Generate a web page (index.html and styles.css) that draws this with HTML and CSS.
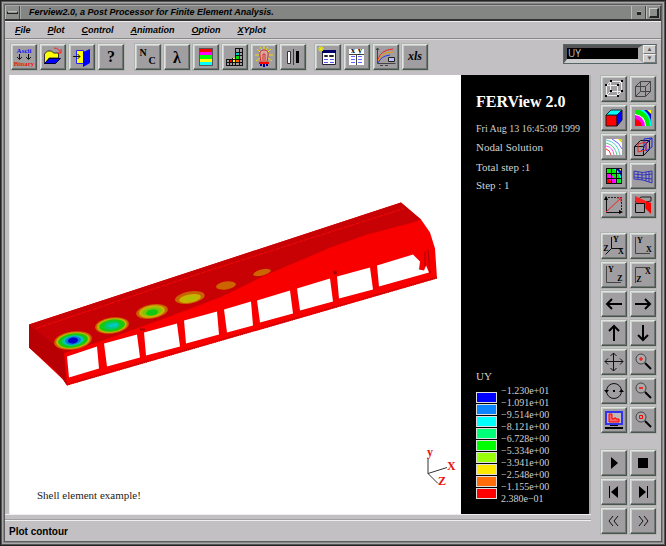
FILE: index.html
```html
<!DOCTYPE html>
<html lang="en">
<head>
<meta charset="utf-8">
<title>Ferview2.0, a Post Processor for Finite Element Analysis.</title>
<link rel="stylesheet" href="styles.css">
</head>
<body>
<div class="window">
  <header class="titlebar">
    <button class="sysmenu" aria-label="Window menu"><span></span></button>
    <h1>Ferview2.0, a Post Processor for Finite Element Analysis.</h1>
    <button class="winbtn" aria-label="Minimize"><span class="dot"></span></button>
    <button class="winbtn" aria-label="Maximize"><span class="square"></span></button>
  </header>
  <nav class="menubar">
    <a href="#"><u>F</u>ile</a><a href="#"><u>P</u>lot</a><a href="#"><u>C</u>ontrol</a><a href="#"><u>A</u>nimation</a><a href="#"><u>O</u>ption</a><a href="#"><u>X</u>Yplot</a>
  </nav>
  <div class="toolbar">
    <div class="group">
      <button class="tool" aria-label="Ascii to binary"><svg viewBox="0 0 26 26"><text x="13" y="9" class="tiny blue">Ascii</text><path d="M8.500 10v5M6 13l2.500 2.500L11 13M17.500 10v5M15 13l2.500 2.500L20 13" class="ln"/><text x="13" y="22" class="tiny red">Binary</text></svg></button>
      <button class="tool" aria-label="Open"><svg viewBox="0 0 26 26"><path d="M4.500 20V10l3-3h4l2 2h5v5H9z" fill="#ff0" stroke="#333"/><path d="M4.500 19.500l5-5h11l-5 5z" fill="#00f" stroke="#003"/><path d="M14 4c4 0 5 2 7 5M21 5v4h-4" fill="none" stroke="#f22"/></svg></button>
      <button class="tool" aria-label="Exit"><svg viewBox="0 0 26 26"><path d="M7.500 6.500h7v13h-7z" fill="#ff0" stroke="#22f"/><path d="M14 8l7-3v14l-7 4z" fill="#00f"/><path d="M4 12.500h7M8.500 10l2.500 2.500L8.500 15" class="ln"/></svg></button>
      <button class="tool" aria-label="Help"><svg viewBox="0 0 26 26"><text x="13" y="18" class="big">?</text></svg></button>
    </div>
    <div class="group">
      <button class="tool" aria-label="Numbering"><svg viewBox="0 0 26 26"><text x="8" y="12" class="mid">N</text><text x="17" y="20" class="mid">C</text></svg></button>
      <button class="tool" aria-label="Lambda"><svg viewBox="0 0 26 26"><text x="13" y="19" class="big">λ</text></svg></button>
      <button class="tool" aria-label="Color scale"><svg viewBox="0 0 26 26"><path d="M6 4h14v18H6z" fill="#555"/><path d="M7 5h12v3H7z" fill="#f00"/><path d="M7 8h12v3H7z" fill="#f0f"/><path d="M7 11h12v4H7z" fill="#0f0"/><path d="M7 15h12v3H7z" fill="#ff0"/><path d="M7 18h12v3H7z" fill="#0ff"/></svg></button>
      <button class="tool" aria-label="Mesh colors"><svg viewBox="0 0 26 26"><path d="M7 15h4v4H7z" fill="#f00"/><path d="M10 14h4v4h-4z" fill="#ff0"/><path d="M13 11h4v4h-4z" fill="#0d0"/><path d="M13 8h4v3h-4z" fill="#0cc"/><path d="M13 15h4v3h-4z" fill="#f60"/><path d="M4 15.500h17M4 18.500h17M4 21.500h17M13 4.500h8M13 8.500h8M13 11.500h8M4.500 15v7M7.500 15v7M10.500 14v8M13.500 4v18M17.500 4v18M20.500 4v18" class="ln"/></svg></button>
      <button class="tool" aria-label="Light"><svg viewBox="0 0 26 26"><path d="M13 2v3M6 5l3 3M20 5l-3 3M4 11h4M18 11h4M5 17l4-3M21 17l-4-3M9 3l2 3M17 3l-2 3" stroke="#ed0"/><path d="M10 18l-1-6q-1-6 4-6t4 6l-1 6z" fill="#dba8a0" stroke="#c33"/><path d="M12 17V10h2v7" fill="none" stroke="#c33"/><path d="M8 18h10v2H8z" fill="#f00"/><path d="M10 20v2M13 20v3M16 20v2" stroke="#009" stroke-width="2"/></svg></button>
      <button class="tool" aria-label="Clip"><svg viewBox="0 0 26 26"><path d="M7.500 7.500h3v12h-3z" fill="#fff" stroke="#333"/><path d="M13.500 5v16" stroke="#22f"/><path d="M16 7h3v12h-3z"/></svg></button>
    </div>
    <div class="group last">
      <button class="tool" aria-label="New table"><svg viewBox="0 0 26 26"><path d="M7.500 6.500h13v14h-13z" fill="#fff" stroke="#223"/><path d="M7 6h14v3H7z" fill="#006"/><path d="M9.500 11.500h3v1h-3zM14.500 11.500h4v1h-4z" fill="#fff" stroke="#222"/><path d="M9 15.500h4M15 15.500h4M9 18.500h4M15 18.500h4" stroke="#55e"/><path d="M3 5h6M6 2v6M4 3l4 4M8 3L4 7" stroke="#ee0"/></svg></button>
      <button class="tool" aria-label="XY table"><svg viewBox="0 0 26 26"><path d="M5 5h15v16H5z" fill="#fff"/><path d="M5 10.500h15M12.500 10v11" stroke="#444"/><text x="9" y="9" class="small">x</text><text x="16" y="9" class="small">y</text><path d="M7 12.500h4M14 12.500h4M7 15.500h4M14 15.500h4M7 18.500h4M14 18.500h4" stroke="#66f"/></svg></button>
      <button class="tool" aria-label="Graph"><svg viewBox="0 0 26 26"><path d="M4.500 4v15.500h18M3 6l1.500-2L6 6M7 21.500h3M12 21.500h3" class="ln thin"/><path d="M5 16q2-10 15-11" fill="none" stroke="#e22"/><path d="M5 17q3-9 15-9" fill="none" stroke="#e90"/><path d="M5 19q3-7 12-8" fill="none" stroke="#33d"/><path d="M15.500 13.500h6v4h-6z" fill="#bbf" stroke="#222"/></svg></button>
      <button class="tool" aria-label="Export xls"><svg viewBox="0 0 26 26"><text x="13" y="16" class="it">xls</text></svg></button>
    </div>
    <div class="spinner">
      <input type="text" value="UY" aria-label="Result component">
      <div class="steps"><button aria-label="Previous">▲</button><button aria-label="Next">▼</button></div>
    </div>
  </div>
  <div class="work">
    <main class="main">
      <section class="viewer">
        <div class="canvas">
          <svg class="model" viewBox="10 76 451 438" role="img" aria-label="Contour plot of shell model">
            <path d="M29 325L401 203 421 220 430 233 435 249 437 279 67 386 63 380 29 348z" fill="#f80000"/>
            <path d="M29 325L401 203 421 220 413 223 367 235 333 247 267 275 222 297 167 318 100 342 63 354z" fill="#c80204"/>
            <path d="M29 325L64 353 67 386 63 380 55 371 29 348z" fill="#b80004"/>
            <path d="M36 329L200 274 404 209" fill="none" stroke="#f00808" stroke-dasharray="5 1"/>
            <path d="M67 385L437 278" stroke="#c40000" stroke-width="2" stroke-dasharray="1 1"/>
            <path d="M67 357L97 347 99 369 69 378zM104 344L137 335 140 358 107 367zM144 333L177 324 180 347 146 356zM184 321L217 312 219 335 186 344zM224 310L251 302 253 326 227 333zM257 301L290 291 293 314 260 323zM297 289L330 279 333 302 300 311zM337 277L370 268 373 290 339 299zM377 266L413 255 420 262 419 270 424 271 426 266 429 273 379 287z" fill="#fff"/>
            <path d="M425 252v15M428 250l2 24" stroke="#a00"/>
            <circle cx="335" cy="273" r="2" fill="#a00"/><path d="M140 330h5" stroke="#a00" stroke-width="2"/>
            <g transform="rotate(-8 73 341)"><ellipse cx="73" cy="341" rx="19" ry="9" fill="#c86400"/><ellipse cx="73" cy="341" rx="17" ry="8" fill="#c8b400"/><ellipse cx="73" cy="341" rx="15" ry="7" fill="#18c810"/><ellipse cx="73" cy="341" rx="11" ry="5" fill="#00c8b0"/><ellipse cx="73" cy="341" rx="8" ry="4" fill="#0878d8"/><ellipse cx="73" cy="341" rx="5" ry="3" fill="#0000c8"/></g>
            <g transform="rotate(-8 112 326)"><ellipse cx="112" cy="326" rx="17" ry="8" fill="#c86400"/><ellipse cx="112" cy="326" rx="15" ry="7" fill="#c8b400"/><ellipse cx="112" cy="326" rx="13" ry="6" fill="#18c810"/><ellipse cx="112" cy="326" rx="8" ry="4" fill="#00c870"/><ellipse cx="113" cy="326" rx="5" ry="2" fill="#00c8c0"/></g>
            <g transform="rotate(-9 152 312)"><ellipse cx="152" cy="312" rx="16" ry="7" fill="#c86400"/><ellipse cx="152" cy="312" rx="13" ry="6" fill="#c8b400"/><ellipse cx="152" cy="312" rx="10" ry="4" fill="#78c808"/><ellipse cx="152" cy="313" rx="6" ry="3" fill="#10c810"/></g>
            <g transform="rotate(-10 190 299)"><ellipse cx="190" cy="298" rx="15" ry="6" fill="#c86400"/><ellipse cx="190" cy="299" rx="11" ry="4" fill="#c8b400"/><ellipse cx="191" cy="299" rx="5" ry="2" fill="#b0c000"/></g>
            <ellipse cx="226" cy="286" rx="10" ry="4" fill="#cc6400" transform="rotate(-8 226 286)"/>
            <ellipse cx="262" cy="273" rx="9" ry="3" fill="#cc6400" transform="rotate(-14 262 273)"/>
            <path d="M428 459V474L447 468M428 474L438 484" fill="none" stroke="#333"/>
            <text x="427" y="456" class="axis">y</text><text x="447" y="470" class="axis">X</text><text x="438" y="485" class="axis">Z</text>
          </svg>
          <p class="caption">Shell element example!</p>
        </div>
        <aside class="info">
          <h2>FERView 2.0</h2>
          <p class="date">Fri Aug 13 16:45:09 1999</p>
          <p>Nodal Solution</p>
          <p class="step">Total step :1</p>
          <p>Step : 1</p>
          <h3>UY</h3>
          <div class="legend">
            <div class="swatches"><i class="c1"></i><i class="c2"></i><i class="c3"></i><i class="c4"></i><i class="c5"></i><i class="c6"></i><i class="c7"></i><i class="c8"></i><i class="c9"></i></div>
            <ul><li>−1.230e+01</li><li>−1.091e+01</li><li>−9.514e+00</li><li>−8.121e+00</li><li>−6.728e+00</li><li>−5.334e+00</li><li>−3.941e+00</li><li>−2.548e+00</li><li>−1.155e+00</li><li>2.380e−01</li></ul>
          </div>
        </aside>
      </section>
      <footer class="status">Plot contour</footer>
    </main>
    <aside class="side">
      <div class="pad">
        <button class="tool" aria-label="Nodes"><svg viewBox="0 0 26 26"><path d="M5.500 9.500h11v10h-11zM5.500 9.500l4-4h11v10l-4 4M9.500 5.500v10h11M16.500 9.500l4-4M9.500 15.500l-4 4" fill="none" stroke="#eee"/><path d="M4 8h2v2H4zM4 19h2v2H4zM16 8h2v2h-2zM16 19h2v2h-2zM9 4h2v2H9zM20 4h2v2h-2zM20 14h2v2h-2zM9 14h2v2H9z"/></svg></button>
        <button class="tool" aria-label="Wireframe"><svg viewBox="0 0 26 26"><path d="M5.500 10.500h10v10h-10zM5.500 10.500l5-5h10v10l-5 5M15.500 10.500l5-5M10.500 5.500v10h10M10.500 15.500l-5 5" class="ln thin"/></svg></button>
        <button class="tool" aria-label="Solid"><svg viewBox="0 0 26 26"><path d="M5 10h11v11H5z" fill="#f00" stroke="#311"/><path d="M5 10l5-5h11l-5 5z" fill="#0ff" stroke="#133"/><path d="M16 10l5-5v10l-5 6z" fill="#00f" stroke="#113"/></svg></button>
        <button class="tool" aria-label="Filled contour"><svg viewBox="0 0 26 26"><path d="M5 5h16v16H5z" fill="#00c"/><path d="M17 5h4v4z" fill="#ff0"/><path d="M5 5h9q7 6 7 13v3H5z" fill="#0ff"/><path d="M5 5h5q10 5 10 16H5z" fill="#0e0"/><path d="M5 9q10 1 11 12H5z" fill="#fff"/><path d="M5 10q9 1 10 11H5z" fill="#f0f"/><path d="M5 14q6 1 7 7H5z" fill="#f00"/></svg></button>
        <button class="tool" aria-label="Line contour"><svg viewBox="0 0 26 26"><path d="M5 5h16v16H5z" fill="#fff"/><path d="M5 6q12 2 14 15" class="arc" stroke="#5cc"/><path d="M11 5q8 4 10 10" class="arc" stroke="#66f"/><path d="M17 5h4v4z" fill="#dd0"/><path d="M5 9q9 2 11 12" class="arc" stroke="#5c8"/><path d="M5 12q7 1 8 9" class="arc" stroke="#f5f"/><path d="M5 15q4 1 5 6" class="arc" stroke="#f33"/></svg></button>
        <button class="tool" aria-label="Deformed overlay"><svg viewBox="0 0 26 26"><path d="M4.500 12.500h9v9h-9zM4.500 12.500l6-6h9M13.500 21.500l6-6v-9M13.500 12.500l6-6" class="ln"/><path d="M14 5l8-1v9l-6 4v-8l6-5M14 5v9l-3 3" fill="none" stroke="#22d"/><path d="M8 10l8-2v8l-8 2z" fill="none" stroke="#e22"/></svg></button>
        <button class="tool" aria-label="Contour with mesh"><svg viewBox="0 0 26 26"><path d="M5 5h16v16H5z" fill="#00c"/><path d="M17 5h4v4z" fill="#ff0"/><path d="M5 5h9q7 6 7 13v3H5z" fill="#0ff"/><path d="M5 5h6q9 5 9 16H5z" fill="#0e0"/><path d="M5 10q9 1 10 11H5z" fill="#f0f"/><path d="M5 15q5 1 6 6H5z" fill="#f00"/><path d="M5 5.500h16M5 20.500h16M5.500 5v16M10.500 5v16M15.500 5v16M20.500 5v16M5 10.500h16M5 15.500h16" class="ln"/></svg></button>
        <button class="tool" aria-label="Vector mesh"><svg viewBox="0 0 26 26"><path d="M4 8q8 3 18 0v12q-9-4-18-4zM4 11q9 2 18 0M4 14q9 1 18 2M8 9v7M12 9v8M16 9v9M19 9v10" fill="none" stroke="#33b"/></svg></button>
        <button class="tool" aria-label="Select direction"><svg viewBox="0 0 26 26"><path d="M5.500 5v15.500h15" class="ln"/><path d="M7 5.500h13.500V19" fill="none" stroke="#222" stroke-dasharray="2 1"/><path d="M5 20L20 6M16 6h4v4" fill="none" stroke="#e22"/><path d="M3 8l2-4 2 4zM18 18l4 2-4 2z"/></svg></button>
        <button class="tool" aria-label="Section"><svg viewBox="0 0 26 26"><path d="M5 10l6-5h10v4L15 10z" fill="#a09ea0" stroke="#222"/><path d="M5 4l11 5v8L5 9z" fill="#f22"/><path d="M16 9l5 2v11l-5-5z" fill="#f00"/><path d="M5.500 11.500h9v9h-9z" fill="#a09ea0" stroke="#111"/></svg></button>
      </div>
      <div class="pad">
        <button class="tool" aria-label="Isometric"><svg viewBox="0 0 26 26"><path d="M10.500 4v11.500h11M10.500 15.500l-6 6" class="ln"/><text x="15" y="9" class="small">Y</text><text x="20" y="21" class="small">X</text><text x="5" y="18" class="small">Z</text></svg></button>
        <button class="tool" aria-label="XY view"><svg viewBox="0 0 26 26"><path d="M5.500 4v16.500H20" class="ln thin"/><text x="10" y="10" class="small">Y</text><text x="19" y="19" class="small">X</text></svg></button>
        <button class="tool" aria-label="YZ view"><svg viewBox="0 0 26 26"><path d="M5.500 4v16.500H20" class="ln thin"/><text x="10" y="10" class="small">Y</text><text x="19" y="19" class="small">Z</text></svg></button>
        <button class="tool" aria-label="XZ view"><svg viewBox="0 0 26 26"><path d="M5.500 21V5.500H20" class="ln thin"/><text x="18" y="12" class="small">X</text><text x="9" y="20" class="small">Z</text></svg></button>
        <button class="tool" aria-label="Left"><svg viewBox="0 0 26 26"><path d="M21 13H7M11 8l-5 5 5 5" class="ar"/></svg></button>
        <button class="tool" aria-label="Right"><svg viewBox="0 0 26 26"><path d="M5 13h14M15 8l5 5-5 5" class="ar"/></svg></button>
        <button class="tool" aria-label="Up"><svg viewBox="0 0 26 26"><path d="M13 21V7M8 11l5-5 5 5" class="ar"/></svg></button>
        <button class="tool" aria-label="Down"><svg viewBox="0 0 26 26"><path d="M13 5v14M8 15l5 5 5-5" class="ar"/></svg></button>
        <button class="tool" aria-label="Pan"><svg viewBox="0 0 26 26"><path d="M12.500 4v18M4 12.500h18M9.500 7l3-3 3 3M9.500 19l3 3 3-3M7 9.500l-3 3 3 3M19 9.500l3 3-3 3" class="ln"/></svg></button>
        <button class="tool" aria-label="Zoom in"><svg viewBox="0 0 26 26"><circle cx="11" cy="10" r="5" class="lens"/><path d="M15 14l6 6" class="handle"/><path d="M9 10h4M11 8v4" stroke="#f00"/></svg></button>
        <button class="tool" aria-label="Rotate"><svg viewBox="0 0 26 26"><circle cx="13" cy="13" r="7.500" class="ln"/><path d="M3 12h5l-2.500 3zM18 14h5l-2.500-3zM12 12h2v2h-2z"/></svg></button>
        <button class="tool" aria-label="Zoom out"><svg viewBox="0 0 26 26"><circle cx="11" cy="10" r="5" class="lens"/><path d="M15 14l6 6" class="handle"/><path d="M9 10h4" stroke="#f00" stroke-width="1.500"/></svg></button>
        <button class="tool" aria-label="Fit to screen"><svg viewBox="0 0 26 26"><path d="M5 5h16v12H5z" fill="#bbb" stroke="#33e" stroke-width="2"/><path d="M8 7h3v5h2v-1h2v1h3v3H8z" fill="#f66" stroke="#f00"/><path d="M9 18h8v1H9zM4 20h18v2H4z"/></svg></button>
        <button class="tool" aria-label="Zoom box"><svg viewBox="0 0 26 26"><circle cx="11" cy="10" r="5" class="lens"/><path d="M15 14l6 6" class="handle"/><path d="M9.500 8.500h3v3h-3z" fill="none" stroke="#f00"/></svg></button>
      </div>
      <div class="pad player">
        <button class="tool" aria-label="Play"><svg viewBox="0 0 26 26"><path d="M10 7l7 6-7 6z"/></svg></button>
        <button class="tool" aria-label="Stop"><svg viewBox="0 0 26 26"><path d="M8 8h10v10H8z"/></svg></button>
        <button class="tool" aria-label="First"><svg viewBox="0 0 26 26"><path d="M8 7h1v12H8zM17 7l-7 6 7 6z"/></svg></button>
        <button class="tool" aria-label="Last"><svg viewBox="0 0 26 26"><path d="M17 7h1v12h-1zM9 7l7 6-7 6z"/></svg></button>
        <button class="tool" aria-label="Slower"><svg viewBox="0 0 26 26"><path d="M12 8l-4 5 4 5M17 8l-4 5 4 5" class="ln"/></svg></button>
        <button class="tool" aria-label="Faster"><svg viewBox="0 0 26 26"><path d="M9 8l4 5-4 5M14 8l4 5-4 5" class="ln"/></svg></button>
      </div>
    </aside>
  </div>
</div>
</body>
</html>
```
FILE: styles.css
```css
* { box-sizing: border-box; }
body { margin: 0; background: #c2c0c2; color: #000; font-family: "Liberation Sans", sans-serif; }
h1, h2, h3, p, ul { margin: 0; padding: 0; font-weight: normal; }
button { margin: 0; padding: 0; border: 0; border-radius: 0; font-family: inherit; }
.window {
  display: flex; flex-direction: column; min-height: 100vh; padding: 4px;
  border: 1px solid #222;
  box-shadow: inset 0 0 0 1px #555, inset 0 0 0 2px #a8a8a8, inset 0 0 0 3px #858585, inset 0 0 0 4px #5c5c5c;
}
.titlebar {
  display: flex; align-items: stretch; height: 16px; background: #848684;
  border-top: 1px solid #a8a8a8; border-bottom: 2px solid #333;
}
.titlebar h1 { flex: 1; padding-left: 8px; line-height: 13px; font-size: 9px; font-style: italic; font-weight: bold; border-left: 1px solid #aaa; }
.sysmenu, .winbtn { display: flex; align-items: center; justify-content: center; width: 15px; background: #8c8e8c; border-left: 1px solid #bbb; border-right: 1px solid #444; }
.sysmenu span { width: 11px; height: 3px; border: 1px solid #222; border-top-color: #bbb; }
.dot { width: 4px; height: 4px; background: #222; border-top: 1px solid #aaa; }
.square { width: 10px; height: 10px; border: 1px solid #ccc; border-right: 2px solid #222; border-bottom: 2px solid #222; }
.menubar {
  display: flex; gap: 17px; height: 18px; padding-left: 10px;
  border-top: 1px solid #eee; border-bottom: 1px solid #888;
}
.menubar a { color: #000; text-decoration: none; line-height: 16px; font-size: 9px; font-style: italic; font-weight: bold; }
.toolbar { display: flex; gap: 9px; height: 36px; padding: 4px 4px 0 6px; border-top: 1px solid #ddd; }
.group { display: flex; gap: 3px; height: 26px; }
.group + .group { margin-left: 2px; }
.group + .last { margin-left: 0; }
.tool {
  width: 26px; height: 26px; background: #a09ea0; border: 1px solid;
  border-color: #e0e4e0 #4c5450 #4c5450 #e0e4e0;
  box-shadow: inset -1px -1px #707672, inset 1px 1px #c8ccc8, 0 0 0 1px #b0b4b0;
}
.tool svg { display: block; width: 26px; height: 26px; margin: -1px; }
.tool text { font-family: "Liberation Serif", serif; font-weight: bold; text-anchor: middle; }
.tool .tiny { font-size: 7px; }
.tool .small { font-size: 8px; }
.tool .mid { font-size: 10px; }
.tool .big { font-size: 16px; }
.tool .it { font-style: italic; font-size: 12px; }
.tool .blue { fill: #11f; }
.tool .red { fill: #f11; }
.ln { fill: none; stroke: #111; stroke-width: 1px; }
.thin { stroke: #444; }
.arc { fill: none; }
.ar { fill: none; stroke: #000; stroke-width: 2px; }
.lens { fill: #aaa; stroke: #444; stroke-width: 1px; }
.handle { stroke: #000; stroke-width: 2px; }
.spinner { display: flex; width: 94px; height: 20px; margin-left: auto; border: 1px solid #566; border-right-color: #777; }
.spinner input {
  flex: 1; min-width: 0; padding: 0 1px; background: #000; color: #b8b8b8; border: 3px solid;
  border-color: #555 #aaa #ccc #555; border-right-width: 5px; border-bottom-width: 4px; border-radius: 0; font: 10px/11px "Noto Sans", sans-serif;
}
.steps { display: flex; flex-direction: column; width: 13px; }
.steps button { flex: 1; font-size: 6px; line-height: 7px; color: #555; background: #ccc; border: 1px solid; border-color: #eee #777 #777 #eee; }
.work { display: flex; flex: 1; }
.main { display: flex; flex: 1; flex-direction: column; }
.viewer { display: flex; flex: 1; margin-left: 4px; background: #000; border-right: 2px solid #aaa; border-left: 1px solid #eee; }
.canvas { display: flex; flex: 1; flex-direction: column; position: relative; background: #fff; }
.model { display: block; flex: 1; width: 100%; height: 0; min-height: 0; }
.axis { font: bold 12px "Liberation Serif", serif; fill: #e81010; }
.caption { position: absolute; left: 27px; bottom: 12px; font: 11px/14px "Liberation Serif", serif; color: #222; }
.info { display: flex; flex-direction: column; width: 128px; padding: 17px 0 9px 15px; color: #d0d0d0; font: 11px/18px "Liberation Serif", serif; }
.info h2 { margin-bottom: 8px; font-size: 16px; line-height: 20px; font-weight: bold; color: #fff; }
.info h3 { margin: auto 0 2px; font-size: 11px; line-height: 14px; }
.info .date { font-size: 10px; white-space: nowrap; }
.info .step { margin-top: 2px; }
.legend { display: flex; gap: 4px; font-size: 10px; line-height: 12px; }
.swatches { padding-top: 7px; }
.swatches i { display: block; width: 21px; height: 11px; margin-bottom: 1px; border: 1px solid #ddd; }
.legend ul { list-style: none; }
.c1 { background: #00f; } .c2 { background: #0a84ff; } .c3 { background: #0ff; }
.c4 { background: #00ff78; } .c5 { background: #0f0; } .c6 { background: #98ff08; }
.c7 { background: #ffe800; } .c8 { background: #ff6c08; } .c9 { background: #f00; }
.side { padding: 1px 5px 0 10px; }
.pad { display: grid; grid-template-columns: 26px 26px; gap: 3px; margin-bottom: 15px; }
.player { margin: 17px 0 0; }
.status {
  height: 27px; padding: 9px 4px 0; font-size: 10px; line-height: 16px; font-weight: bold; border-top: 1px solid #eee;
  background: linear-gradient(#a0a0a0, #a0a0a0) 0 4px / 100% 1px no-repeat, linear-gradient(#eee, #eee) 0 5px / 100% 1px no-repeat;
}
```
